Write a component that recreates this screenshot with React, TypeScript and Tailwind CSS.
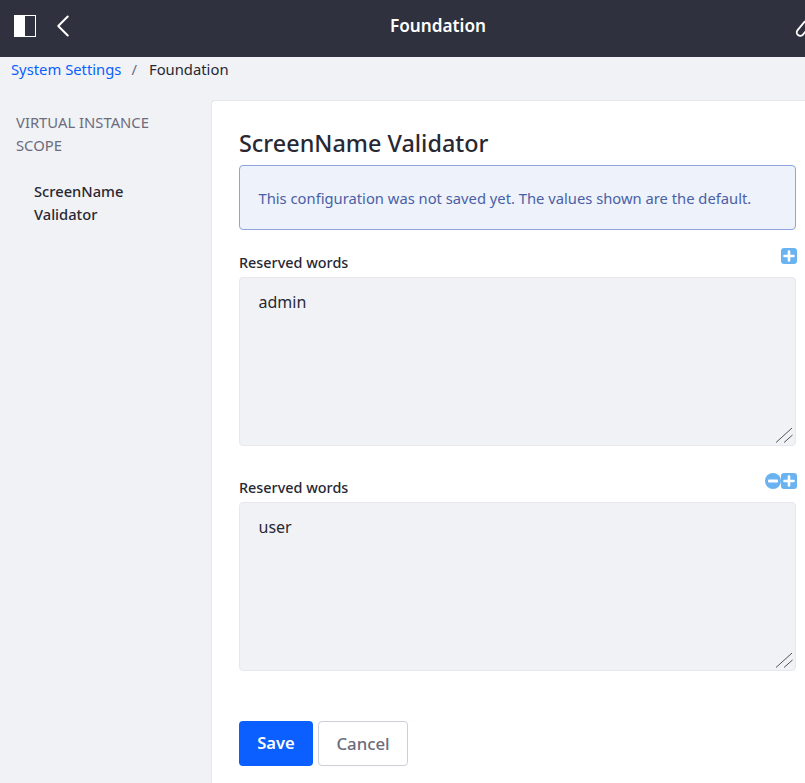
import { ChevronLeft } from 'lucide-react';

function SquareIcon({ minus }: { minus?: boolean }) {
  return (
    <svg width="16" height="16" viewBox="0 0 16 16" className="block">
      {minus ? (
        <>
          <circle cx="8" cy="8" r="8" fill="#6bb3f0" />
          <rect x="3" y="6.5" width="10" height="3" rx="1" fill="#fff" />
        </>
      ) : (
        <>
          <rect width="16" height="16" rx="3" fill="#6bb3f0" />
          <path d="M8 3.5v9M3.5 8h9" stroke="#fff" strokeWidth="2.6" strokeLinecap="round" />
        </>
      )}
    </svg>
  );
}

function WordsField({ value, minus }: { value: string; minus?: boolean }) {
  return (
    <div>
      <div className="flex h-[30px] items-start justify-between">
        <label className="mt-[6px] text-[14.4px] font-medium leading-[20px] text-[#272833]">Reserved words</label>
        <div className="-mr-[1px] mt-[1px] flex">
          {minus && <SquareIcon minus />}
          <SquareIcon />
        </div>
      </div>
      <div className="relative">
        <textarea
          readOnly
          value={value}
          className="block h-[169px] w-full resize-none rounded-[4px] border border-[#e7e7ed] bg-[#f1f2f5] pb-[11px] pl-[18.5px] pr-[18px] pt-[12px] text-[16px] leading-[24px] text-[#272833] outline-none"
        />
        {/* resize grip */}
        <svg width="20" height="16" viewBox="0 0 20 16" className="pointer-events-none absolute bottom-[3px] right-[1px]">
          <path d="M1 15.5 17 1M9 15.5 17.5 8" stroke="#555" strokeWidth="1" fill="none" />
        </svg>
      </div>
    </div>
  );
}

export default function App() {
  return (
    <div className="h-[783px] w-[805px] overflow-hidden bg-[#f1f2f5] font-['Noto_Sans','Open_Sans',sans-serif] text-[#272833]">
      <header className="relative flex h-[57px] items-center bg-[#30313f] pb-[6px] text-white">
        <div className="ml-[14px] flex h-[22px] w-[22px] border border-white">
          <div className="w-1/2 bg-white" />
        </div>
        <ChevronLeft className="ml-[8px] h-[38px] w-[38px]" strokeWidth={1.25} />
        <h1 className="absolute left-0 w-[876px] text-center text-[17.2px] font-semibold">Foundation</h1>
        <svg width="20" height="20" viewBox="0 0 20 20" className="absolute left-[794px] top-[17px]">
          <rect x="1" y="8" width="17" height="7" rx="3.5" transform="rotate(-50 9.5 11.5)" fill="none" stroke="#fff" strokeWidth="1.8" />
        </svg>
      </header>

      <nav className="flex h-[28px] items-center pb-[3px] pl-[11px] text-[14.8px]">
        <a className="text-[#0b5fff]">System Settings</a>
        <span className="mx-[10px] text-[#6b6c7e]">/</span>
        <span className="ml-[2px]">Foundation</span>
      </nav>

      <div className="mt-[15px] flex">
        <aside className="w-[211px] shrink-0 pl-[16px] pt-[11px]">
          <div className="w-[170px] text-[14.8px] leading-[23px] text-[#6b6c7e]">VIRTUAL INSTANCE SCOPE</div>
          <div className="ml-[18px] mt-[23px] w-[110px] text-[14.7px] font-medium leading-[23px] text-[#272833]">ScreenName Validator</div>
        </aside>
        <main className="h-[700px] flex-1 rounded-tl-[4px] border-l border-t border-[#e7e7ed] bg-white pl-[27px] pr-[9px] pt-[26px]">
          <h2 className="-mt-[1px] text-[23.4px] font-medium leading-[34px]">ScreenName Validator</h2>
          <div className="mt-[5px] flex h-[65px] items-center rounded-[4px] border border-[#8da5dc] bg-[#edf2fb] pl-[18.5px] pr-[10px] pt-[1px] text-[14.75px] text-[#4b5fa5]">
            This configuration was not saved yet. The values shown are the default.
          </div>
          <div className="mt-[17px]">
            <WordsField value="admin" />
          </div>
          <div className="mt-[26px]">
            <WordsField value="user" minus />
          </div>
          <div className="mt-[50px] flex gap-[5px]">
            <button className="h-[45px] w-[74px] rounded-[4px] bg-[#0b5fff] text-[16.5px] font-semibold text-white">Save</button>
            <button className="h-[45px] w-[90px] rounded-[4px] border border-[#cdced9] bg-white text-[16.8px] font-medium text-[#6b6c7e]">Cancel</button>
          </div>
        </main>
      </div>
    </div>
  );
}
